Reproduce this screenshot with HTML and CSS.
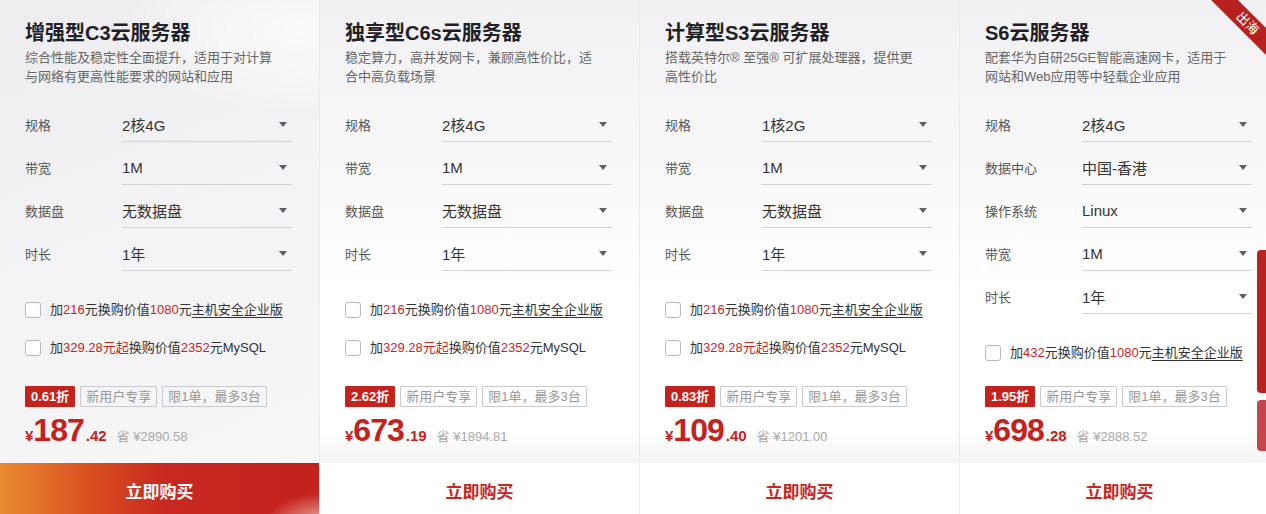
FILE: index.html
```html
<!DOCTYPE html>
<html lang="zh-CN">
<head>
  <meta charset="UTF-8">
  <meta name="viewport" content="width=device-width, initial-scale=1.0">
  <title>云服务器</title>
  <link rel="stylesheet" href="styles.css">
</head>
<body>
  <div class="cards">

    <!-- C3 -->
    <div class="card card-active">
      <div class="card-body">
        <h3 class="card-title">增强型C3云服务器</h3>
        <p class="card-desc">综合性能及稳定性全面提升，适用于对计算<br>与网络有更高性能要求的网站和应用</p>
        <div class="spec-list">
          <div class="spec-row"><span class="spec-label">规格</span><div class="select"><span>2核4G</span><i class="arrow"></i></div></div>
          <div class="spec-row"><span class="spec-label">带宽</span><div class="select"><span>1M</span><i class="arrow"></i></div></div>
          <div class="spec-row"><span class="spec-label">数据盘</span><div class="select"><span>无数据盘</span><i class="arrow"></i></div></div>
          <div class="spec-row"><span class="spec-label">时长</span><div class="select"><span>1年</span><i class="arrow"></i></div></div>
        </div>
        <div class="addons">
          <div class="addon"><span class="checkbox"></span><span>加<em>216</em>元换购价值<em>1080</em>元<u>主机安全企业版</u></span></div>
          <div class="addon"><span class="checkbox"></span><span>加<em>329.28元起</em>换购价值<em>2352</em>元MySQL</span></div>
        </div>
        <div class="promo">
          <div class="tags"><span class="tag tag-off">0.61折</span><span class="tag">新用户专享</span><span class="tag">限1单，最多3台</span></div>
          <div class="price"><span class="yen">¥</span><span class="num">187</span><span class="dec">.42</span><span class="save">省 ¥2890.58</span></div>
        </div>
      </div>
      <a class="buy-btn">立即购买</a>
    </div>

    <!-- C6s -->
    <div class="card">
      <div class="card-body">
        <h3 class="card-title">独享型C6s云服务器</h3>
        <p class="card-desc">稳定算力，高并发网卡，兼顾高性价比，适<br>合中高负载场景</p>
        <div class="spec-list">
          <div class="spec-row"><span class="spec-label">规格</span><div class="select"><span>2核4G</span><i class="arrow"></i></div></div>
          <div class="spec-row"><span class="spec-label">带宽</span><div class="select"><span>1M</span><i class="arrow"></i></div></div>
          <div class="spec-row"><span class="spec-label">数据盘</span><div class="select"><span>无数据盘</span><i class="arrow"></i></div></div>
          <div class="spec-row"><span class="spec-label">时长</span><div class="select"><span>1年</span><i class="arrow"></i></div></div>
        </div>
        <div class="addons">
          <div class="addon"><span class="checkbox"></span><span>加<em>216</em>元换购价值<em>1080</em>元<u>主机安全企业版</u></span></div>
          <div class="addon"><span class="checkbox"></span><span>加<em>329.28元起</em>换购价值<em>2352</em>元MySQL</span></div>
        </div>
        <div class="promo">
          <div class="tags"><span class="tag tag-off">2.62折</span><span class="tag">新用户专享</span><span class="tag">限1单，最多3台</span></div>
          <div class="price"><span class="yen">¥</span><span class="num">673</span><span class="dec">.19</span><span class="save">省 ¥1894.81</span></div>
        </div>
      </div>
      <a class="buy-btn">立即购买</a>
    </div>

    <!-- S3 -->
    <div class="card">
      <div class="card-body">
        <h3 class="card-title">计算型S3云服务器</h3>
        <p class="card-desc">搭载英特尔® 至强® 可扩展处理器，提供更<br>高性价比</p>
        <div class="spec-list">
          <div class="spec-row"><span class="spec-label">规格</span><div class="select"><span>1核2G</span><i class="arrow"></i></div></div>
          <div class="spec-row"><span class="spec-label">带宽</span><div class="select"><span>1M</span><i class="arrow"></i></div></div>
          <div class="spec-row"><span class="spec-label">数据盘</span><div class="select"><span>无数据盘</span><i class="arrow"></i></div></div>
          <div class="spec-row"><span class="spec-label">时长</span><div class="select"><span>1年</span><i class="arrow"></i></div></div>
        </div>
        <div class="addons">
          <div class="addon"><span class="checkbox"></span><span>加<em>216</em>元换购价值<em>1080</em>元<u>主机安全企业版</u></span></div>
          <div class="addon"><span class="checkbox"></span><span>加<em>329.28元起</em>换购价值<em>2352</em>元MySQL</span></div>
        </div>
        <div class="promo">
          <div class="tags"><span class="tag tag-off">0.83折</span><span class="tag">新用户专享</span><span class="tag">限1单，最多3台</span></div>
          <div class="price"><span class="yen">¥</span><span class="num">109</span><span class="dec">.40</span><span class="save">省 ¥1201.00</span></div>
        </div>
      </div>
      <a class="buy-btn">立即购买</a>
    </div>

    <!-- S6 -->
    <div class="card">
      <span class="ribbon">出海</span>
      <div class="card-body">
        <h3 class="card-title">S6云服务器</h3>
        <p class="card-desc">配套华为自研25GE智能高速网卡，适用于<br>网站和Web应用等中轻载企业应用</p>
        <div class="spec-list">
          <div class="spec-row"><span class="spec-label">规格</span><div class="select"><span>2核4G</span><i class="arrow"></i></div></div>
          <div class="spec-row"><span class="spec-label">数据中心</span><div class="select"><span>中国-香港</span><i class="arrow"></i></div></div>
          <div class="spec-row"><span class="spec-label">操作系统</span><div class="select"><span>Linux</span><i class="arrow"></i></div></div>
          <div class="spec-row"><span class="spec-label">带宽</span><div class="select"><span>1M</span><i class="arrow"></i></div></div>
          <div class="spec-row"><span class="spec-label">时长</span><div class="select"><span>1年</span><i class="arrow"></i></div></div>
        </div>
        <div class="addons">
          <div class="addon"><span class="checkbox"></span><span>加<em>432</em>元换购价值<em>1080</em>元<u>主机安全企业版</u></span></div>
        </div>
        <div class="promo">
          <div class="tags"><span class="tag tag-off">1.95折</span><span class="tag">新用户专享</span><span class="tag">限1单，最多3台</span></div>
          <div class="price"><span class="yen">¥</span><span class="num">698</span><span class="dec">.28</span><span class="save">省 ¥2888.52</span></div>
        </div>
      </div>
      <a class="buy-btn">立即购买</a>
    </div>

  </div>

  <!-- 右侧悬浮栏 -->
  <div class="side-bar">
    <span class="side-item"></span>
    <span class="side-item side-item-light"></span>
  </div>
</body>
</html>
```

FILE: styles.css
```css
body {
  margin: 0;
  padding: 0;
  background-color: #fff;
  font-family: "Liberation Sans", "Noto Sans CJK SC", sans-serif;
  color: #333;
  overflow: hidden;
}
.cards {
  display: flex;
  width: 1280px;
}
.card {
  position: relative;
  width: 320px;
  flex-shrink: 0;
  display: flex;
  flex-direction: column;
  border-right: 1px solid #e9e9eb;
  box-sizing: border-box;
  overflow: hidden;
}
.card-body {
  height: 463px;
  box-sizing: border-box;
  padding: 19px 27px 15px 25px;
  display: flex;
  flex-direction: column;
  background: linear-gradient(180deg, #f1f1f3 0, #f8f8f9 160px, #fff 290px, #fff 430px, #f3f3f4 463px);
}
.card-active .card-body {
  background:
    radial-gradient(ellipse 260px 120px at 300px 30px, rgba(255,255,255,0.7), rgba(255,255,255,0) 70%),
    linear-gradient(160deg, #ededef 0, #f3f3f5 45%, #f6f6f7 100%);
}
.card-title {
  margin: 0;
  font-size: 20px;
  line-height: 28px;
  font-weight: bold;
  color: #1f2126;
}
.card-desc {
  margin: 1px 0 0;
  font-size: 13px;
  line-height: 19px;
  color: #666;
  white-space: nowrap;
}
.spec-list {
  margin-top: 21px;
  display: flex;
  flex-direction: column;
  gap: 8px;
}
.spec-row {
  display: flex;
  align-items: stretch;
  height: 35px;
}
.spec-label {
  width: 97px;
  font-size: 13px;
  color: #555;
  display: flex;
  align-items: center;
}
.select {
  flex: 1;
  display: flex;
  align-items: center;
  justify-content: space-between;
  border-bottom: 1px solid #d2d2d4;
  font-size: 15px;
  color: #333;
  padding-right: 5px;
}
.arrow {
  width: 0;
  height: 0;
  border-left: 4px solid transparent;
  border-right: 4px solid transparent;
  border-top: 5px solid #5c5f66;
}
.addons {
  margin-top: 29px;
  display: flex;
  flex-direction: column;
  gap: 18px;
}
.addon {
  display: flex;
  align-items: center;
  font-size: 13px;
  line-height: 20px;
  color: #333;
  white-space: nowrap;
}
.addon em {
  font-style: normal;
  color: #c7251f;
}
.addon u {
  text-underline-offset: 3px;
}
.checkbox {
  width: 14px;
  height: 14px;
  border: 1px solid #b9b9bc;
  border-radius: 3px;
  background-color: #fff;
  margin-right: 9px;
  flex-shrink: 0;
}
.promo {
  margin-top: auto;
}
.tags {
  display: flex;
  gap: 5px;
}
.tag {
  height: 21px;
  line-height: 19px;
  padding: 0 5px;
  box-sizing: border-box;
  border: 1px solid #c9c9cc;
  font-size: 13px;
  color: #999;
  border-radius: 1px;
}
.tag-off {
  background-color: #c3221d;
  border-color: #c3221d;
  color: #fff;
  font-weight: bold;
}
.price {
  margin-top: 5px;
  height: 36px;
  display: flex;
  align-items: baseline;
  color: #c3221d;
  font-weight: bold;
}
.yen {
  font-size: 15px;
}
.num {
  font-size: 32px;
  line-height: 36px;
  letter-spacing: -1px;
}
.dec {
  font-size: 15px;
  margin-left: 2px;
}
.save {
  margin-left: 10px;
  font-size: 13px;
  font-weight: normal;
  color: #aaa;
}
.buy-btn {
  display: flex;
  align-items: center;
  justify-content: center;
  height: 54px;
  background-color: #fff;
  color: #c7251f;
  font-size: 17px;
  font-weight: bold;
  cursor: pointer;
}
.card-active .buy-btn {
  color: #fff;
  background:
    radial-gradient(ellipse 60px 30px at 325px 60px, rgba(255,215,205,0.8), rgba(255,215,205,0) 100%),
    linear-gradient(90deg, #e88b30 0, #d9501f 28%, #c8281f 52%, #c3221d 100%);
}
.ribbon {
  position: absolute;
  top: 18px;
  left: 232px;
  width: 120px;
  height: 19px;
  line-height: 19px;
  background-color: #b8221e;
  color: #fff;
  font-size: 13px;
  text-align: center;
  transform: rotate(45deg);
  text-indent: -12px;
}
.side-bar {
  position: fixed;
  right: -20px;
  top: 250px;
  display: flex;
  flex-direction: column;
  gap: 7px;
}
.side-item {
  width: 29px;
  height: 143px;
  background-color: #b8231f;
  border-radius: 4px 0 0 4px;
}
.side-item-light {
  height: 51px;
  background-color: #c4464c;
}
```
